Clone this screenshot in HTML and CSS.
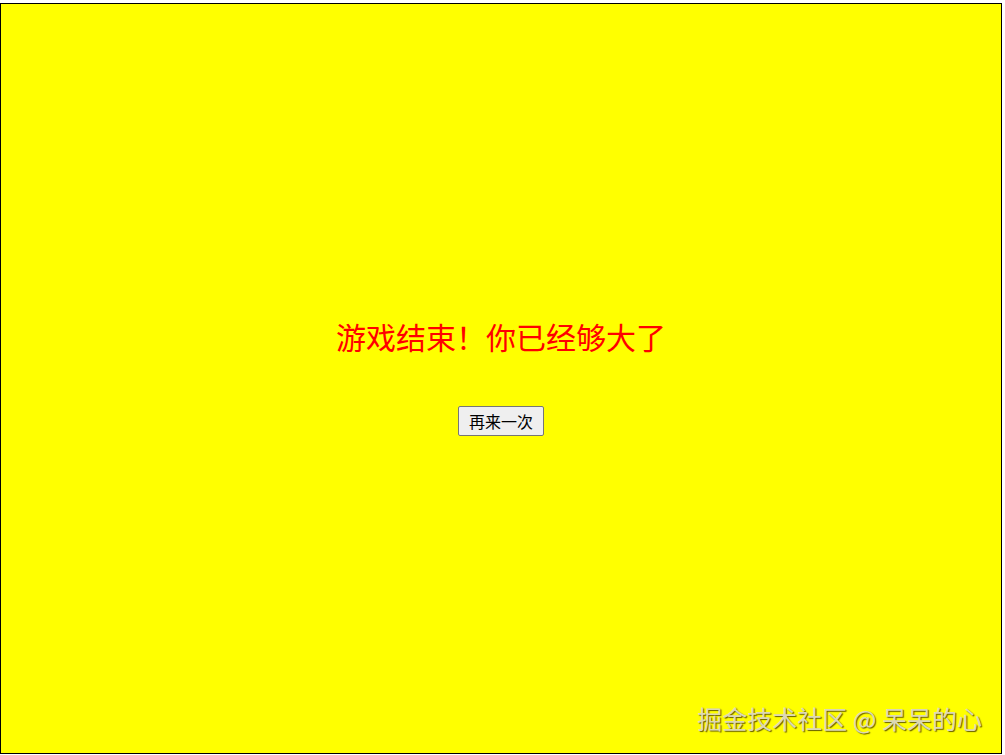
FILE: index.html
```html
<!DOCTYPE html>
<html lang="zh-CN">
<head>
<meta charset="utf-8">
<title>游戏结束</title>
<link rel="stylesheet" href="styles.css">
</head>
<body>
<div class="stage">
  <div class="over">
    <div class="title">游戏结束！你已经够大了</div>
    <button class="again" type="button">再来一次</button>
  </div>
</div>
<div class="watermark">掘金技术社区 @ 呆呆的心</div>
</body>
</html>
```

FILE: styles.css
```css
html, body {
  margin: 0;
  padding: 0;
  background: #ffffff;
  font-family: "Noto Sans CJK SC", "Liberation Sans", sans-serif;
}

.stage {
  margin-top: 3px;
  width: 1000px;
  height: 749px;
  border: 1px solid #000000;
  background: #ffff00;
  display: flex;
  align-items: center;
  justify-content: center;
}

.over {
  display: flex;
  flex-direction: column;
  align-items: center;
  gap: 50px;
  padding-bottom: 6px;
}

.title {
  color: #ff0000;
  font-size: 30px;
  line-height: 40px;
}

.again {
  box-sizing: border-box;
  height: 30px;
  font-family: "Noto Sans CJK SC", "Liberation Sans", sans-serif;
  font-size: 16px;
  line-height: 22px;
  padding: 0 10px;
  color: #000000;
  background: #efefef;
  border: 1px solid #767676;
  border-radius: 2px;
}

.watermark {
  position: absolute;
  right: 23px;
  bottom: 22px;
  font-size: 25px;
  line-height: 30px;
  color: #dcd8b4;
  text-shadow: 1px 1px 1px rgba(60, 50, 0, 0.8);
}
```
